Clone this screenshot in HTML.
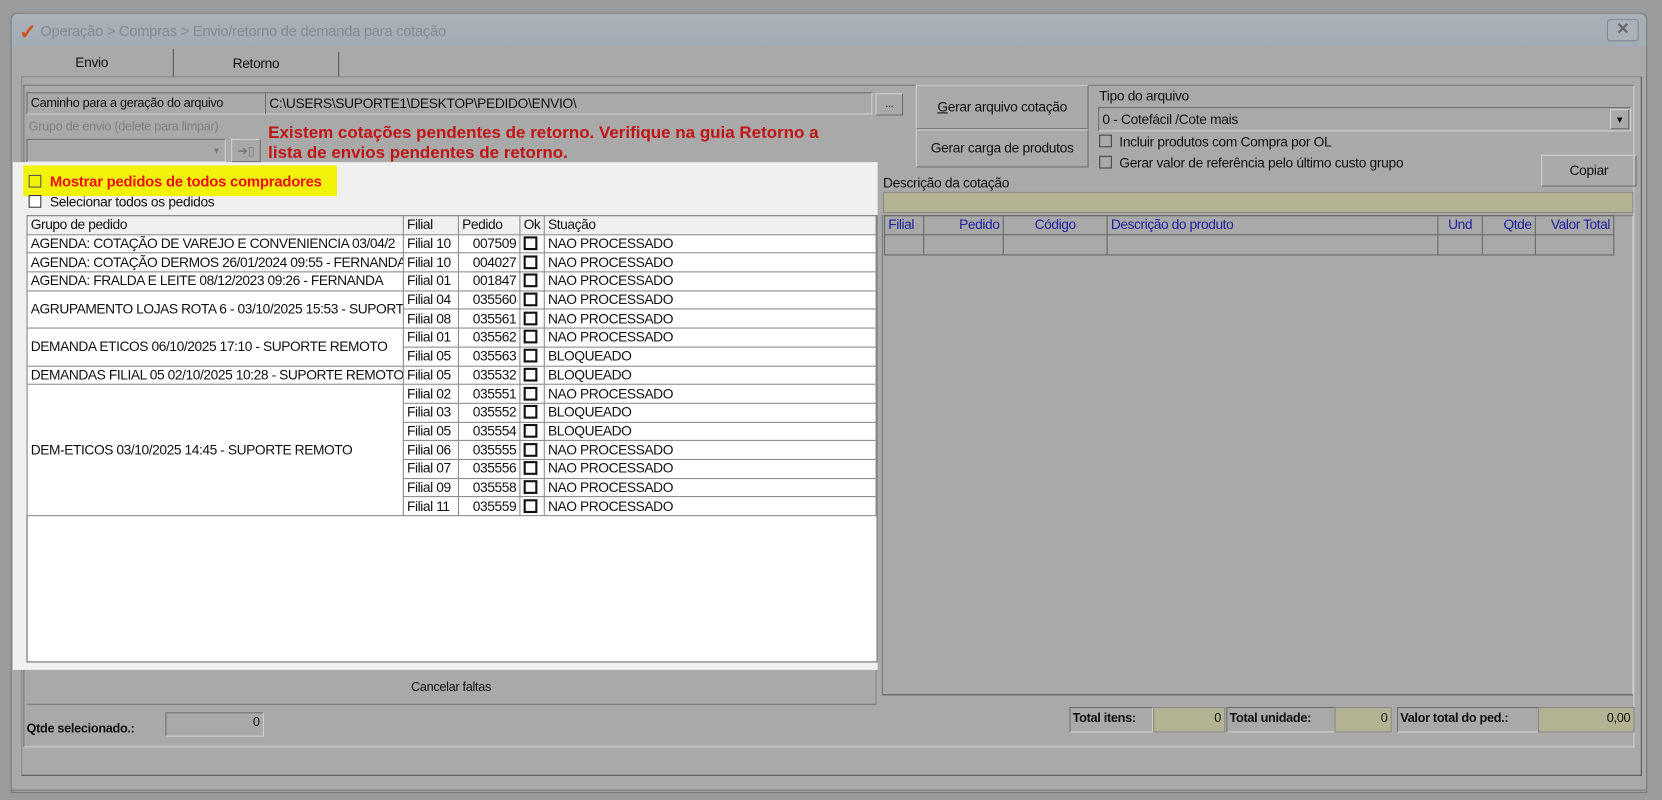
<!DOCTYPE html>
<html><head><meta charset="utf-8">
<style>
*{box-sizing:border-box;margin:0;padding:0}
html,body{width:1662px;height:800px;overflow:hidden;background:#9b9b9b}
#w{position:absolute;left:0;top:0;width:1568px;height:755px;transform:scale(1.05995);transform-origin:0 0;font-family:"Liberation Sans Narrow","Liberation Sans",sans-serif;font-size:12px;color:#111;letter-spacing:-0.3px}
.a{position:absolute}
.sunk{border:1px solid;border-color:#6e6e6e #d0d0d0 #d0d0d0 #6e6e6e}
.rais{border:1px solid;border-color:#d0d0d0 #6e6e6e #6e6e6e #d0d0d0}
.cb{position:absolute;width:12px;height:12px;border:1px solid #333;background:#a9a9a9}
table{border-collapse:collapse;table-layout:fixed}
td{border:1px solid #8a8a8a;height:17.7px;padding:0 3px;white-space:nowrap;overflow:hidden;font-size:13px;line-height:16px;letter-spacing:-0.4px}
.ok{display:inline-block;width:13px;height:13px;border:2px solid #111;vertical-align:-2px}
</style></head><body>
<div id="w">
<div class="a" style="left:10px;top:12px;width:1544px;height:736px;background:#a9a9a9;border:1px solid #777;border-radius:6px 6px 0 0"></div>
<div class="a" style="left:11px;top:13px;width:1542px;height:31px;background:linear-gradient(#a9b0b8,#a3abb4);border-radius:6px 6px 0 0"></div>
<div class="a" style="left:18px;top:18px;color:#d05020;font-size:20px;font-weight:bold;font-family:'Liberation Sans'">✓</div>
<div class="a" style="left:38px;top:21px;color:#848a92;font-size:14px">Operação &gt; Compras &gt; Envio/retorno de demanda para cotação</div>
<div class="a" style="left:1516px;top:18px;width:30px;height:21px;border:1px solid #7c8796;border-radius:3px;background:#aab1b9;color:#666;font-size:15px;text-align:center;line-height:18px;font-weight:bold">✕</div>
<div class="a" style="left:10px;top:46px;width:154px;height:27px;border-right:1px solid #555;text-align:center;line-height:26px;font-size:13px">Envio</div>
<div class="a" style="left:164px;top:49px;width:156px;height:24px;border-right:1px solid #555;text-align:center;line-height:22px;font-size:13px">Retorno</div>
<div class="a" style="left:20px;top:72px;width:1529px;height:660px;border:1px solid;border-color:#888 #555 #555 #888"></div>
<div class="a" style="left:22px;top:80px;width:1520px;height:625px;border:1px solid;border-color:#777 #d0d0d0 #d0d0d0 #777"></div>
<div class="a sunk" style="left:25px;top:87px;width:226px;height:21px;padding:2px 3px">Caminho para a geração do arquivo</div>
<div class="a sunk" style="left:250px;top:87px;width:573px;height:21px;padding:2px 3px;font-size:13px">C:\USERS\SUPORTE1\DESKTOP\PEDIDO\ENVIO\</div>
<div class="a rais" style="left:826px;top:88px;width:26px;height:21px;text-align:center;font-size:10px;line-height:20px">...</div>
<div class="a" style="left:27px;top:112px;color:#7f7f7f">Grupo de envio (delete para limpar)</div>
<div class="a sunk" style="left:25px;top:131px;width:188px;height:22px"><span class="a" style="right:4px;top:6px;font-size:8px;color:#777">▼</span></div>
<div class="a rais" style="left:218px;top:131px;width:28px;height:22px;color:#777;text-align:center;line-height:20px">➔▯</div>
<div class="a" style="left:253px;top:116px;color:#c01414;font-size:16px;font-weight:bold;line-height:19px;font-family:'Liberation Sans';letter-spacing:0">Existem cotações pendentes de retorno. Verifique na guia Retorno a<br>lista de envios pendentes de retorno.</div>
<div class="a" style="left:12px;top:153px;width:816px;height:479px;background:#f0f0f0"></div>
<div class="a" style="left:22px;top:156px;width:296px;height:29px;background:#f2f20a"></div>
<div class="cb" style="left:27px;top:165px;background:#f2f20a;border-color:#555"></div>
<div class="a" style="left:47px;top:163px;color:#f01010;font-weight:bold;font-size:14px;font-family:'Liberation Sans';letter-spacing:-0.2px">Mostrar pedidos de todos compradores</div>
<div class="cb" style="left:27px;top:184px;background:#fff"></div>
<div class="a" style="left:47px;top:183px;font-size:13px">Selecionar todos os pedidos</div>
<div class="a" style="left:25px;top:203px;width:803px;height:422px;background:#fff;border:1px solid #666"></div>
<table class="a" style="left:25px;top:203px;width:802px">
<colgroup><col style="width:355px"><col style="width:52px"><col style="width:58px"><col style="width:23px"><col></colgroup>
<tr style="background:#f0f0f0"><td>Grupo de pedido</td><td>Filial</td><td>Pedido</td><td>Ok</td><td>Stuação</td></tr>
<tr><td>AGENDA: COTAÇÃO DE VAREJO E CONVENIENCIA 03/04/2</td><td>Filial 10</td><td style="text-align:right">007509</td><td><span class="ok"></span></td><td>NAO PROCESSADO</td></tr>
<tr><td>AGENDA: COTAÇÃO DERMOS 26/01/2024 09:55 - FERNANDA</td><td>Filial 10</td><td style="text-align:right">004027</td><td><span class="ok"></span></td><td>NAO PROCESSADO</td></tr>
<tr><td>AGENDA: FRALDA E LEITE 08/12/2023 09:26 - FERNANDA</td><td>Filial 01</td><td style="text-align:right">001847</td><td><span class="ok"></span></td><td>NAO PROCESSADO</td></tr>
<tr><td rowspan="2">AGRUPAMENTO LOJAS ROTA 6 - 03/10/2025 15:53 - SUPORTE</td><td>Filial 04</td><td style="text-align:right">035560</td><td><span class="ok"></span></td><td>NAO PROCESSADO</td></tr>
<tr><td>Filial 08</td><td style="text-align:right">035561</td><td><span class="ok"></span></td><td>NAO PROCESSADO</td></tr>
<tr><td rowspan="2">DEMANDA ETICOS 06/10/2025 17:10 - SUPORTE REMOTO</td><td>Filial 01</td><td style="text-align:right">035562</td><td><span class="ok"></span></td><td>NAO PROCESSADO</td></tr>
<tr><td>Filial 05</td><td style="text-align:right">035563</td><td><span class="ok"></span></td><td>BLOQUEADO</td></tr>
<tr><td>DEMANDAS FILIAL 05 02/10/2025 10:28 - SUPORTE REMOTO</td><td>Filial 05</td><td style="text-align:right">035532</td><td><span class="ok"></span></td><td>BLOQUEADO</td></tr>
<tr><td rowspan="7">DEM-ETICOS 03/10/2025 14:45 - SUPORTE REMOTO</td><td>Filial 02</td><td style="text-align:right">035551</td><td><span class="ok"></span></td><td>NAO PROCESSADO</td></tr>
<tr><td>Filial 03</td><td style="text-align:right">035552</td><td><span class="ok"></span></td><td>BLOQUEADO</td></tr>
<tr><td>Filial 05</td><td style="text-align:right">035554</td><td><span class="ok"></span></td><td>BLOQUEADO</td></tr>
<tr><td>Filial 06</td><td style="text-align:right">035555</td><td><span class="ok"></span></td><td>NAO PROCESSADO</td></tr>
<tr><td>Filial 07</td><td style="text-align:right">035556</td><td><span class="ok"></span></td><td>NAO PROCESSADO</td></tr>
<tr><td>Filial 09</td><td style="text-align:right">035558</td><td><span class="ok"></span></td><td>NAO PROCESSADO</td></tr>
<tr><td>Filial 11</td><td style="text-align:right">035559</td><td><span class="ok"></span></td><td>NAO PROCESSADO</td></tr>
</table>
<div class="a" style="left:25px;top:632px;width:802px;height:33px;border-bottom:1px solid #777;border-right:1px solid #888;text-align:center;line-height:32px">Cancelar faltas</div>
<div class="a" style="left:25px;top:680px;font-weight:bold;font-size:12px">Qtde selecionado.:</div>
<div class="a sunk" style="left:156px;top:672px;width:93px;height:23px;text-align:right;padding:1px 3px">0</div>
<div class="a rais" style="left:864px;top:80px;width:163px;height:42px;text-align:center;line-height:40px;font-size:13px"><u>G</u>erar arquivo cotação</div>
<div class="a rais" style="left:864px;top:122px;width:163px;height:36px;text-align:center;line-height:34px;font-size:13px">Gerar carga de produtos</div>
<div class="a" style="left:1037px;top:83px;font-size:13px">Tipo do arquivo</div>
<div class="a sunk" style="left:1036px;top:101px;width:503px;height:23px;padding:3px 3px;font-size:13px">0 - Cotefácil /Cote mais<span class="a rais" style="right:1px;top:1px;width:18px;height:19px;font-size:9px;text-align:center;line-height:18px">▼</span></div>
<div class="cb" style="left:1037px;top:127px;border-color:#444"></div>
<div class="a" style="left:1056px;top:126px;font-size:13px">Incluir produtos com Compra por OL</div>
<div class="cb" style="left:1037px;top:147px;border-color:#444"></div>
<div class="a" style="left:1056px;top:146px;font-size:13px">Gerar valor de referência pelo último custo grupo</div>
<div class="a rais" style="left:1454px;top:146px;width:90px;height:30px;text-align:center;line-height:28px;font-size:13px">Copiar</div>
<div class="a" style="left:833px;top:165px;font-size:13px">Descrição da cotação</div>
<div class="a" style="left:833px;top:181px;width:708px;height:20px;background:#b3b393;border:1px solid #888"></div>
<div class="a" style="left:832px;top:203px;width:709px;height:453px;border:1px solid;border-color:#777 #ccc #555 #777"></div>
<table class="a" style="left:834px;top:203px;width:689px">
<colgroup><col style="width:37px"><col style="width:75px"><col style="width:98px"><col style="width:312px"><col style="width:42px"><col style="width:50px"><col></colgroup>
<tr style="color:#2020a0"><td style="border-color:#666">Filial</td><td style="text-align:right;border-color:#666">Pedido</td><td style="text-align:center;border-color:#666">Código</td><td style="border-color:#666">Descrição do produto</td><td style="text-align:center;border-color:#666">Und</td><td style="text-align:right;border-color:#666">Qtde</td><td style="text-align:right;border-color:#666">Valor Total</td></tr>
<tr><td style="border-color:#666;height:19px"></td><td style="border-color:#666"></td><td style="border-color:#666"></td><td style="border-color:#666"></td><td style="border-color:#666"></td><td style="border-color:#666"></td><td style="border-color:#666"></td></tr>
</table>
<div class="a sunk" style="left:1009px;top:667px;width:79px;height:24px;font-weight:bold;padding:2px 2px">Total itens:</div>
<div class="a" style="left:1088px;top:667px;width:68px;height:24px;background:#b3b393;border:1px solid #888;text-align:right;padding:2px 3px">0</div>
<div class="a sunk" style="left:1157px;top:667px;width:103px;height:24px;font-weight:bold;padding:2px 2px">Total unidade:</div>
<div class="a" style="left:1259px;top:667px;width:54px;height:24px;background:#b3b393;border:1px solid #888;text-align:right;padding:2px 3px">0</div>
<div class="a sunk" style="left:1318px;top:667px;width:134px;height:24px;font-weight:bold;padding:2px 2px">Valor total do ped.:</div>
<div class="a" style="left:1451px;top:667px;width:91px;height:24px;background:#b3b393;border:1px solid #888;text-align:right;padding:2px 3px">0,00</div>
<div class="a" style="left:11px;top:745px;width:1542px;height:3px;border-top:1px solid #777"></div>
</div>
</body></html>
